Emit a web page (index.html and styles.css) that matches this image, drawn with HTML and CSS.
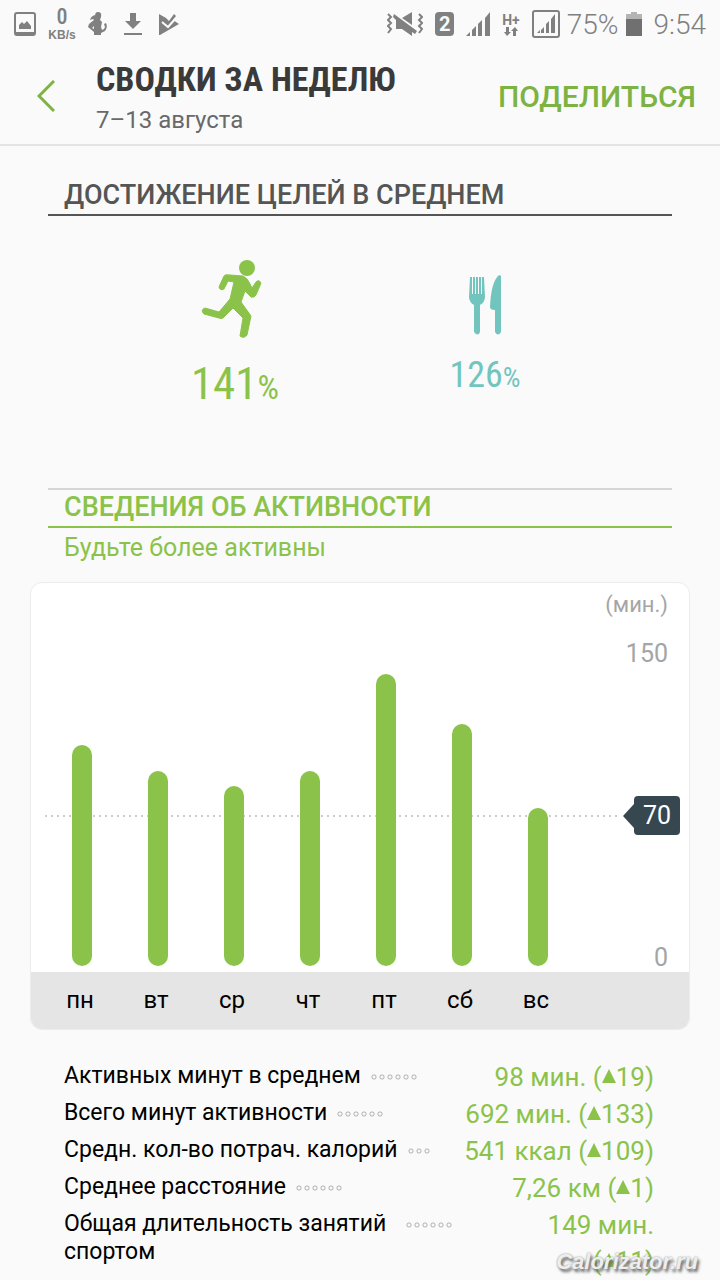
FILE: index.html
```
<!DOCTYPE html>
<html lang="ru">
<head>
    <meta charset="UTF-8">
    <meta name="viewport" content="width=device-width, initial-scale=1.0">
    <title>Сводки за неделю</title>
    <link rel="stylesheet" href="styles.css">
</head>
<body>
    <div class="status-bar">
        <div class="status-left">
            <svg width="22" height="24" viewBox="0 0 22 24"><path fill="#808080" fill-rule="evenodd" d="M3 0h16q3 0 3 3v18q0 3-3 3H3q-3 0-3-3V3q0-3 3-3zM2 3v17h18V3q0-1-1-1H3q-1 0-1 1zM5 17v-4l3-3 2 2 3-3 4 5v3z"/></svg>
            <div class="speed"><span class="speed-value">0</span><span class="speed-unit">KB/s</span></div>
            <svg width="20" height="24" viewBox="0 0 20 24"><path fill="#808080" d="M7 4Q7 0 10 0q4 0 3 5l-1 3 2 2-1 5 1 3 2-1 1-2-1-3 2-1q2 4-1 8l-4 2v2H6v-3l-6-5 1-3 5-4-1-1-3 1q1-4 5-5z"/><path fill="#fafafa" d="M6 14l-2 2 2 1z"/></svg>
            <svg width="18" height="22" viewBox="0 0 18 22"><path fill="#808080" d="M6 0h6v8h5l-8 8-8-8h5zM0 20h18v2H0z"/></svg>
            <svg width="21" height="22" viewBox="0 0 21 22"><path fill="#808080" d="M1 1l7 4 3 3 5-7 2 2-3 4 6 4L2 22H1z"/><path fill="none" stroke="#fafafa" stroke-width="2" d="M4 9l6 5 8-9"/></svg>
        </div>
        <div class="status-right">
            <svg width="36" height="24" viewBox="0 0 36 24"><g fill="none" stroke="#808080" stroke-width="2"><path d="M1 2l3 3-3 3 3 3-3 3 3 3-3 4M32 2l3 3-3 3 3 3-3 3 3 3-3 4"/></g><path fill="#808080" d="M15 6l10-6v13zM7 2l23 17-2 3-3-2v4l-10-7H9V8l-3-3z"/></svg>
            <span class="sim">2</span>
            <svg width="24" height="24" viewBox="0 0 24 24"><path fill="#808080" d="M0 24l4-4v4zM6 18l4-4v10H6zM12 12l4-4v16h-4zM19 6l5-6v24h-5z"/></svg>
            <div class="network">
                <span>H+</span>
                <svg width="14" height="9" viewBox="0 0 14 9"><path fill="#808080" d="M2 0h3v5h2L3 9 0 5h2zM11 0l3 4h-2v5H9V4H7z"/></svg>
            </div>
            <div class="battery">
                <svg width="28" height="28" viewBox="0 0 28 28"><rect x="1" y="1" width="26" height="26" rx="2" fill="none" stroke="#808080" stroke-width="2"/><path fill="#808080" d="M5 23l3-3v3zM9 20l3-3v6H9zM14 14l3-3v12h-3zM19 9l4-5v19h-4z"/></svg>
                <span class="status-text">75%</span>
                <svg width="16" height="24" viewBox="0 0 16 24"><path fill="#b4b4b4" d="M5 0h6v2h5v5H0V2h5z"/><path fill="#707070" d="M0 7h16v17H0z"/></svg>
            </div>
            <span class="status-text">9:54</span>
        </div>
    </div>

    <header class="header">
        <button class="back" aria-label="Назад">
            <svg width="18" height="32" viewBox="0 0 18 32"><path fill="none" stroke="#7cb342" stroke-width="3" d="M17 1L2 16l15 15"/></svg>
        </button>
        <div class="titles">
            <h1>СВОДКИ ЗА НЕДЕЛЮ</h1>
            <p class="dates">7–13 августа</p>
        </div>
        <button class="share">ПОДЕЛИТЬСЯ</button>
    </header>

    <main>
        <section class="goals">
            <h2>ДОСТИЖЕНИЕ ЦЕЛЕЙ В СРЕДНЕМ</h2>
            <div class="goals-grid">
                <div class="goal goal-activity">
                    <svg width="68" height="80" viewBox="0 0 68 80"><circle cx="46" cy="8" r="8" fill="#8bc34a"/><path fill="#8bc34a" stroke="#8bc34a" stroke-linejoin="round" d="M29 15L42 16Q46 18 48 22L51 28L55 22Q58 19 60 23L55 35Q53 38 50 37L44 31L40 42L50 56L46 75Q43 79 39 76L42 58L32 48L22 58Q20 59 18 58L3 54Q-1 50 4 48L18 52L29 39L33 22L27 21L23 29Q19 31 18 27L23 16Q24 14 29 15Z"/></svg>
                    <p class="percent">141<span>%</span></p>
                </div>
                <div class="goal goal-food">
                    <svg width="32" height="60" viewBox="0 0 32 60"><path fill="#72c5be" d="M1 2h2v17h1V2h2v17h1V2h2v17h1V2h2v17h1V2h2l1 20q0 5-5 8v27q-2 5-6 0V30q-5-3-5-8zM32 1v56q-3 5-6 0V35q-5 0-5-3Q22 7 30 0z"/></svg>
                    <p class="percent">126<span>%</span></p>
                </div>
            </div>
        </section>

        <section class="activity">
            <h2>СВЕДЕНИЯ ОБ АКТИВНОСТИ</h2>
            <p class="advice">Будьте более активны</p>
        </section>

        <div class="chart">
            <div class="plot">
                <div class="goal-line"></div>
                <div class="bars">
                    <div class="bar" style="height: 221px"></div>
                    <div class="bar" style="height: 195px"></div>
                    <div class="bar" style="height: 180px"></div>
                    <div class="bar" style="height: 195px"></div>
                    <div class="bar" style="height: 292px"></div>
                    <div class="bar" style="height: 242px"></div>
                    <div class="bar" style="height: 158px"></div>
                </div>
                <div class="axis">
                    <span class="unit">(мин.)</span>
                    <span>150</span>
                    <span class="zero">0</span>
                </div>
                <div class="goal-tag">70</div>
            </div>
            <div class="days">
                <span>пн</span>
                <span>вт</span>
                <span>ср</span>
                <span>чт</span>
                <span>пт</span>
                <span>сб</span>
                <span>вс</span>
            </div>
        </div>

        <dl class="stats">
            <div class="row">
                <dt>Активных минут в среднем</dt>
                <dd class="dots"></dd>
                <dd class="value">98 мин. (<i class="up"></i>19)</dd>
            </div>
            <div class="row">
                <dt>Всего минут активности</dt>
                <dd class="dots"></dd>
                <dd class="value">692 мин. (<i class="up"></i>133)</dd>
            </div>
            <div class="row">
                <dt>Средн. кол-во потрач. калорий</dt>
                <dd class="dots dots-short"></dd>
                <dd class="value">541 ккал (<i class="up"></i>109)</dd>
            </div>
            <div class="row">
                <dt>Среднее расстояние</dt>
                <dd class="dots"></dd>
                <dd class="value">7,26 км (<i class="up"></i>1)</dd>
            </div>
            <div class="row">
                <dt class="long">Общая длительность занятий спортом</dt>
                <dd class="dots"></dd>
                <dd class="value">149 мин.<br>(<i class="up"></i>11)</dd>
            </div>
        </dl>
    </main>
    <div class="watermark">Calorizator.ru</div>
</body>
</html>
```
FILE: styles.css
```
* {
    box-sizing: border-box;
}
body {
    position: relative;
    margin: 0;
    background: #fafafa;
    color: #000;
    font-family: Roboto, "Noto Sans", sans-serif;
}
h1, h2, p, dl, dd {
    margin: 0;
}
svg {
    display: block;
}
button {
    padding: 0;
    border: none;
    background: none;
    font-family: inherit;
    cursor: pointer;
}

/* status bar */
.status-bar {
    display: flex;
    justify-content: space-between;
    height: 48px;
    padding: 0 14px;
    color: #808080;
}
.status-left, .status-right, .battery {
    display: flex;
    align-items: center;
}
.status-left {
    gap: 16px;
}
.status-right {
    gap: 12px;
}
.battery {
    gap: 7px;
}
.speed {
    display: flex;
    flex-direction: column;
    align-items: center;
    width: 28px;
    margin: 0 -4px;
}
.speed-value {
    font-family: "Roboto Condensed", "Liberation Sans Narrow", sans-serif;
    font-size: 22px;
    font-weight: 500;
    line-height: 22px;
}
.speed-unit {
    font-family: "Liberation Sans", sans-serif;
    font-size: 12px;
    font-weight: bold;
    line-height: 14px;
}
.sim {
    width: 19px;
    height: 24px;
    border-radius: 4px;
    background: #808080;
    color: #fafafa;
    font-size: 20px;
    font-weight: bold;
    line-height: 24px;
    text-align: center;
}
.network {
    display: flex;
    flex-direction: column;
    align-items: center;
    font-size: 14px;
    font-weight: bold;
    line-height: 14px;
}
.status-text {
    font-size: 28px;
    font-weight: 300;
}

/* header */
.header {
    display: flex;
    align-items: center;
    height: 98px;
    padding: 0 24px 0 37px;
    border-bottom: 2px solid #e4e4e4;
}
.titles {
    flex: 1;
    margin-left: 41px;
    padding-top: 4px;
}
h1 {
    color: #3a3a3a;
    font-family: "Roboto Condensed", "Liberation Sans Narrow", Roboto, sans-serif;
    font-size: 34px;
    line-height: 44px;
}
.dates {
    color: #696969;
    font-size: 24px;
    line-height: 38px;
}
.share {
    color: #7cb342;
    font-size: 30px;
    font-weight: 500;
}

/* sections */
section {
    margin: 0 48px;
}
h2 {
    padding: 0 16px 2px;
    border-bottom: 2px solid;
    font-size: 27px;
    font-weight: 500;
    line-height: 34px;
}
.goals {
    padding-top: 32px;
    color: #555;
}
.goals-grid {
    display: grid;
    grid-template-columns: 1fr 1fr;
    height: 272px;
    padding: 44px 62px 0;
}
.goal {
    display: flex;
    flex-direction: column;
    align-items: center;
}
.goal-activity {
    color: #8bc34a;
}
.goal-food {
    padding-top: 15px;
    color: #72c5be;
}
.percent {
    margin-top: 20px;
    font-family: "Roboto Condensed", "Liberation Sans Narrow", Roboto, sans-serif;
    font-size: 45px;
    line-height: 48px;
}
.percent span {
    font-size: 34px;
}
.goal-food .percent {
    font-size: 36px;
    line-height: 40px;
}
.goal-food .percent span {
    font-size: 28px;
}
.activity {
    border-top: 2px solid #d6d6d6;
    color: #8bc34a;
}
.advice {
    padding: 0 16px;
    font-size: 25px;
    line-height: 40px;
}

/* chart */
.chart {
    margin: 14px 30px 0;
    border: 1px solid #ececec;
    border-radius: 12px;
    background: #fff;
    overflow: hidden;
}
.plot {
    position: relative;
    display: flex;
    height: 389px;
    padding: 0 0 6px 13px;
}
.goal-line {
    position: absolute;
    right: 68px;
    bottom: 155px;
    left: 14px;
    height: 2px;
    background: repeating-linear-gradient(90deg, #ccc 0 2px, transparent 2px 6px);
}
.bars {
    position: relative;
    display: grid;
    flex: 1;
    grid-template-columns: repeat(7, 1fr);
    align-items: end;
    justify-items: center;
}
.bar {
    width: 20px;
    border-radius: 10px;
    background: #8bc34a;
}
.axis {
    display: flex;
    flex-direction: column;
    width: 113px;
    padding: 6px 21px 0 0;
    color: #a5a5a5;
    font-size: 25px;
    line-height: 32px;
    text-align: right;
}
.unit {
    margin-bottom: 17px;
    font-size: 22px;
}
.zero {
    margin-top: auto;
    line-height: 16px;
}
.goal-tag {
    position: absolute;
    right: 9px;
    bottom: 137px;
    width: 46px;
    border-radius: 4px;
    background: #37474f;
    color: #fff;
    font-size: 25px;
    line-height: 39px;
    text-align: center;
}
.goal-tag::before {
    content: "";
    position: absolute;
    top: 8px;
    right: 100%;
    border: solid transparent;
    border-width: 12px 11px 12px 0;
    border-right-color: #37474f;
}
.days {
    display: grid;
    grid-template-columns: repeat(7, 1fr);
    padding: 0 115px 0 11px;
    background: #e5e5e5;
    font-size: 24px;
    line-height: 57px;
    text-align: center;
}

/* totals */
.stats {
    margin: 29px 66px 0 64px;
}
.row {
    display: flex;
    align-items: flex-start;
    margin-bottom: 1px;
}
dt {
    padding-top: 3px;
    font-size: 23px;
    line-height: 28px;
}
.long {
    width: 332px;
}
.dots {
    width: 48px;
    height: 8px;
    margin: 14px 0 0 9px;
    background: radial-gradient(circle, transparent 1px, #b4b4b4 2px, transparent 3px) 0 0 / 8px 8px;
}
.dots-short {
    width: 24px;
}
.value {
    margin-left: auto;
    color: #8bc34a;
    font-size: 26px;
    line-height: 36px;
    text-align: right;
}
.up {
    display: inline-block;
    border: solid transparent;
    border-width: 0 7px 14px;
    border-bottom-color: #8bc34a;
    margin-bottom: 3px;
}
.watermark {
    position: absolute;
    right: 22px;
    bottom: 4px;
    color: #eee;
    font-family: "Liberation Sans", sans-serif;
    font-size: 22px;
    font-style: italic;
    font-weight: bold;
    line-height: 28px;
    text-shadow: 0 0 2px #888, 2px 3px 3px #666;
}
```
